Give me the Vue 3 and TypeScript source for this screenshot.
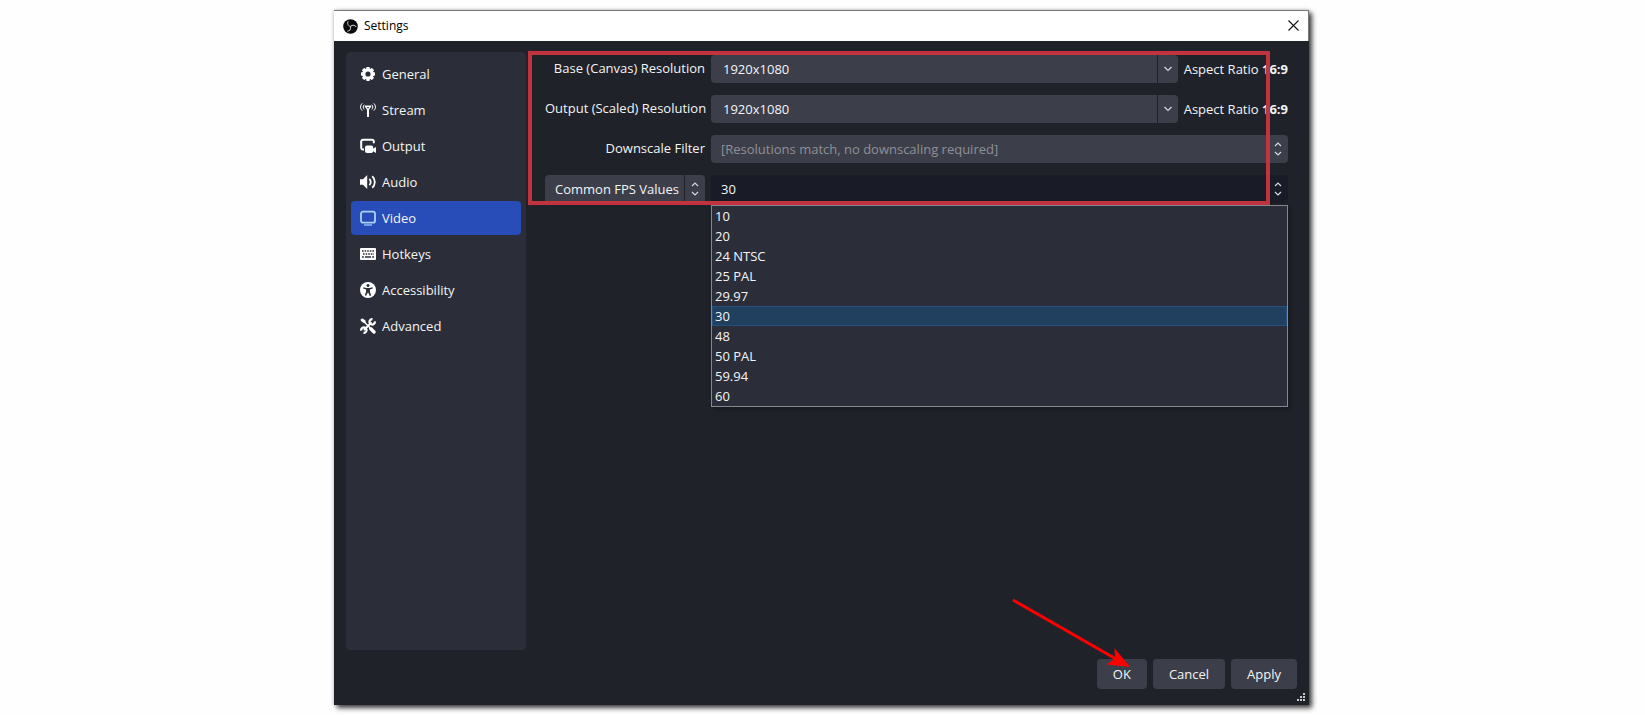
<script setup lang="ts">
import { ref } from 'vue'

const sections = ['General', 'Stream', 'Output', 'Audio', 'Video', 'Hotkeys', 'Accessibility', 'Advanced']
const activeSection = ref('Video')

const resolutions = ref([
  { id: 'base', label: 'Base (Canvas) Resolution', value: '1920x1080', ratio: '16:9' },
  { id: 'output', label: 'Output (Scaled) Resolution', value: '1920x1080', ratio: '16:9' },
])

const fpsValues = ['10', '20', '24 NTSC', '25 PAL', '29.97', '30', '48', '50 PAL', '59.94', '60']
const fps = ref('30')
</script>

<template>
  <main class="page">
    <section class="dialog" role="dialog" aria-labelledby="dialog-title">
      <header class="titlebar">
        <svg class="logo" viewBox="0 0 16 16" aria-hidden="true">
          <circle cx="8" cy="8" r="7.8" fill="#0b0b0b" />
          <g fill="none" stroke="#d0d0d0" stroke-width="1" stroke-linecap="round">
            <path d="M8 8C5.500 7.500 4.300 5.300 5.300 2.800" />
            <path d="M8 8C5.500 7.500 4.300 5.300 5.300 2.800" transform="rotate(120 8 8)" />
            <path d="M8 8C5.500 7.500 4.300 5.300 5.300 2.800" transform="rotate(240 8 8)" />
          </g>
        </svg>
        <h1 id="dialog-title">Settings</h1>
        <button class="close" type="button" aria-label="Close">
          <svg viewBox="0 0 11 11" aria-hidden="true"><path d="M.5.5l10 10M10.5.5l-10 10" fill="none" stroke="#111" stroke-width="1.1" /></svg>
        </button>
      </header>

      <div class="body">
        <nav class="sidebar" aria-label="Settings sections">
          <button
            v-for="name in sections"
            :key="name"
            type="button"
            class="nav-item"
            :class="{ active: name === activeSection }"
            @click="activeSection = name"
          >
            <svg class="icon" viewBox="0 0 16 16" aria-hidden="true">
              <g v-if="name === 'General'">
                <circle cx="8" cy="8" r="4.2" fill="none" stroke="#fff" stroke-width="3.2" />
                <g fill="#fff">
                  <rect
                    v-for="tooth in 8"
                    :key="tooth"
                    x="6.3"
                    y="1"
                    width="3.4"
                    height="3"
                    rx=".6"
                    :transform="`rotate(${tooth * 45} 8 8)`"
                  />
                </g>
              </g>
              <g v-else-if="name === 'Stream'" fill="none" stroke="#fff" stroke-linecap="round">
                <path d="M2 1.600C0 3.400 0 6.600 2 8.400M14 1.600c2 1.800 2 5 0 6.800" stroke-width="1" />
                <path d="M4 3c-1.100 1.200-1.100 2.900 0 4.100M12 3c1.100 1.200 1.100 2.900 0 4.100" stroke-width="1" />
                <path d="M5.300 4.200h5.400L8 7.900z" stroke-width="1.400" stroke-linejoin="round" />
                <path d="M8 7v8" stroke-width="2" stroke-linecap="butt" />
              </g>
              <g v-else-if="name === 'Output'">
                <path d="M4 11.500H3A1.800 1.800 0 0 1 1.200 9.700V3.600A1.800 1.800 0 0 1 3 1.800h9a1.800 1.800 0 0 1 1.800 1.800v1.600" fill="none" stroke="#fff" stroke-width="2" />
                <path d="M7 7.600h4.200a2 2 0 0 1 2 2v1.200l2.800-1.800v6l-2.800-1.800a2 2 0 0 1-2 1.800H7a2 2 0 0 1-2-2V9.600a2 2 0 0 1 2-2z" fill="#fff" />
              </g>
              <g v-else-if="name === 'Audio'">
                <path d="M0 5.200h3L7.200 1v14L3 10.800H0z" fill="#fff" />
                <path d="M9.300 4.800c1.900 1.700 1.900 4.700 0 6.400M12.200 2.300c3.500 3 3.500 8.400 0 11.400" fill="none" stroke="#fff" stroke-width="1.800" />
              </g>
              <g v-else-if="name === 'Video'">
                <rect x="1" y="1.700" width="14" height="11" rx="2" fill="none" stroke="#a9d4ff" stroke-width="1.800" />
                <path d="M4 15h8" stroke="#a9d4ff" stroke-width="1.200" />
              </g>
              <g v-else-if="name === 'Hotkeys'">
                <rect y="2" width="16" height="12" rx="1" fill="#fff" />
                <g stroke="#2b2e38" stroke-width="1.600">
                  <path d="M2 5h12" stroke-dasharray="1.600 1" />
                  <path d="M3 8h11" stroke-dasharray="1.600 1" />
                  <path d="M2 11h1.800M5 11h6M12.200 11H14" />
                </g>
              </g>
              <g v-else-if="name === 'Accessibility'">
                <circle cx="8" cy="8" r="8" fill="#fff" />
                <circle cx="8" cy="3.600" r="1.500" fill="#2b2e38" />
                <path d="M3.500 5.300l3 .7h3l3-.7.4 1.300-3 .9v2.300l1.300 3.700-1.400.5L8.200 10.600h-.4l-1.600 3.100-1.400-.5 1.300-3.700V7.500l-3-.9z" fill="#2b2e38" />
              </g>
              <g v-else fill="none" stroke="#fff" stroke-linecap="round">
                <path d="M11 5l-6.500 6.500" stroke-width="2" />
                <path d="M14.800 3.400a2.700 2.700 0 1 1-2.300-2.200" stroke-width="2.200" stroke-linecap="butt" />
                <path d="M1.200 12.600a2.700 2.700 0 1 1 2.300 2.200" stroke-width="2.200" stroke-linecap="butt" />
                <path d="M2.200 2l2 1.500" stroke-width="3" />
                <path d="M4 3.800l6 6" stroke-width="1.500" />
                <path d="M10.800 10.800l3.200 3.200" stroke-width="3.400" />
              </g>
            </svg>
            <span>{{ name }}</span>
          </button>
        </nav>

        <form class="form" @submit.prevent>
          <template v-for="row in resolutions" :key="row.id">
            <label :for="row.id">{{ row.label }}</label>
            <div class="resolution">
              <div class="combo">
                <input :id="row.id" v-model="row.value" type="text" />
                <button type="button" :aria-label="`Choose ${row.label}`">
                  <svg viewBox="0 0 10 6" aria-hidden="true"><path d="M1.500 1L5 4.500 8.500 1" /></svg>
                </button>
              </div>
              <span class="ratio">Aspect Ratio <b>{{ row.ratio }}</b></span>
            </div>
          </template>

          <label for="downscale">Downscale Filter</label>
          <div class="select">
            <select id="downscale" disabled>
              <option>[Resolutions match, no downscaling required]</option>
            </select>
            <svg class="updown" viewBox="0 0 8 14" aria-hidden="true"><path d="M1 4l3-3 3 3M1 10l3 3 3-3" /></svg>
          </div>

          <div class="select fps-kind">
            <select aria-label="FPS type">
              <option>Common FPS Values</option>
              <option>Integer FPS Value</option>
              <option>Fractional FPS Value</option>
            </select>
            <svg class="updown" viewBox="0 0 8 14" aria-hidden="true"><path d="M1 4l3-3 3 3M1 10l3 3 3-3" /></svg>
          </div>
          <div class="select fps-value">
            <select v-model="fps" aria-label="Common FPS value">
              <option v-for="value in fpsValues" :key="value">{{ value }}</option>
            </select>
            <svg class="updown" viewBox="0 0 8 14" aria-hidden="true"><path d="M1 4l3-3 3 3M1 10l3 3 3-3" /></svg>
            <ul class="popup" role="listbox" aria-label="Common FPS values">
              <li
                v-for="value in fpsValues"
                :key="value"
                role="option"
                :aria-selected="value === fps"
                :class="{ selected: value === fps }"
                @click="fps = value"
              >{{ value }}</li>
            </ul>
          </div>
          <div class="highlight" aria-hidden="true"></div>
        </form>
      </div>

      <footer class="actions">
        <button type="button">OK</button>
        <button type="button">Cancel</button>
        <button type="button">Apply</button>
        <svg class="arrow" viewBox="0 0 120 72" aria-hidden="true">
          <path d="M1 2l103 59" stroke="#f00" stroke-width="3" />
          <path d="M118 69L94.500 66.500l8.500-6-.5-10.500z" fill="#f00" />
        </svg>
        <svg class="grip" viewBox="0 0 8 8" aria-hidden="true">
          <path d="M6 0h2v2H6zM3 3h2v2H3zM6 3h2v2H6zM0 6h2v2H0zM3 6h2v2H3zM6 6h2v2H6z" fill="#c9cacd" />
        </svg>
      </footer>
    </section>
  </main>
</template>

<style>
body {
  margin: 0;
  background: #fefefe;
}
</style>

<style scoped>
* {
  box-sizing: border-box;
}

button,
input,
select {
  margin: 0;
  border: 0;
  padding: 0;
  font: inherit;
  color: inherit;
}

.page {
  display: flex;
  justify-content: center;
  min-height: 100vh;
  padding: 10px 2px 10px 0;
  font: 13px/20px "Open Sans", "Noto Sans", sans-serif;
  color: #f4f4f5;
}

.dialog {
  display: flex;
  flex-direction: column;
  width: 100%;
  max-width: 975px;
  background: #1f2229;
  box-shadow: 3px 3px 5px rgba(0, 0, 0, 0.75), 0 0 4px rgba(0, 0, 0, 0.2);
}

.titlebar {
  display: flex;
  align-items: center;
  gap: 6px;
  height: 31px;
  padding: 0 9px;
  background: #fff;
  border: solid #77787b;
  border-width: 1px 1px 0 0;
  color: #000;
}

.titlebar h1 {
  flex: 1;
  margin: 0;
  font: 12px/20px "Open Sans", "Noto Sans", sans-serif;
}

.logo {
  width: 15px;
  height: 15px;
}

.close {
  display: flex;
  padding-bottom: 2px;
  background: none;
}

.close svg {
  width: 11px;
  height: 11px;
}

.body {
  display: flex;
  flex: 1;
  gap: 19px;
  padding: 11px 21px 0 12px;
}

.sidebar {
  display: flex;
  flex: none;
  flex-direction: column;
  gap: 2px;
  width: 180px;
  padding: 5px;
  background: #2b2e38;
  border-radius: 4px;
}

.nav-item {
  display: flex;
  align-items: center;
  gap: 6px;
  height: 34px;
  padding: 0 9px;
  background: none;
  border-radius: 4px;
  text-align: left;
}

.nav-item.active {
  background: #284cb8;
}

.icon {
  width: 16px;
  height: 16px;
}

.form {
  position: relative;
  display: grid;
  flex: 1;
  grid-template-columns: 160px 1fr;
  grid-auto-rows: 28px;
  align-content: start;
  gap: 12px 6px;
  padding-top: 3px;
}

.form > label {
  padding-top: 3px;
  text-align: right;
  white-space: nowrap;
}

.resolution {
  display: flex;
  align-items: center;
  gap: 6px;
}

.combo {
  display: flex;
  flex: 1;
  height: 28px;
  overflow: hidden;
  background: #3c3f4a;
  border-radius: 4px;
}

.combo input {
  flex: 1;
  min-width: 0;
  padding: 0 12px;
  background: none;
}

.combo button {
  display: flex;
  align-items: center;
  justify-content: center;
  width: 21px;
  background: none;
  border-left: 1px solid #1f2229;
}

.combo svg {
  width: 10px;
  height: 6px;
}

.combo path,
.updown path {
  fill: none;
  stroke: #d8d8dc;
  stroke-width: 1.2;
}

.ratio {
  white-space: nowrap;
}

.select {
  position: relative;
  display: flex;
}

.select select {
  width: 100%;
  height: 28px;
  padding: 0 20px 0 10px;
  appearance: none;
  background: #3c3f4a;
  border-radius: 4px;
  opacity: 1;
}

.select select:disabled {
  color: #8f9097;
}

.fps-kind select {
  background: linear-gradient(#1f2229, #1f2229) right 20px top / 1px 100% no-repeat #3c3f4a;
}

.fps-value select {
  background: #191c27;
}

.updown {
  position: absolute;
  top: 7px;
  right: 6px;
  width: 8px;
  height: 14px;
  pointer-events: none;
}

.popup {
  position: absolute;
  top: 30px;
  right: 0;
  left: 0;
  margin: 0;
  padding: 0;
  list-style: none;
  background: #2b2e38;
  border: 1px solid #85878d;
  box-shadow: 2px 2px 4px rgba(0, 0, 0, 0.3);
}

.popup li {
  height: 20px;
  padding-left: 2px;
  border: 1px solid transparent;
  line-height: 18px;
}

.popup .selected {
  background: #213f5f;
  border-color: #23507c;
}

.highlight {
  position: absolute;
  top: -1px;
  right: 18px;
  left: -17px;
  height: 154px;
  border: 4px solid #c1343f;
  pointer-events: none;
}

.actions {
  position: relative;
  display: flex;
  justify-content: flex-end;
  gap: 6px;
  padding: 9px 12px 16px;
}

.actions button {
  height: 30px;
  padding: 0 16px;
  background: #3c3f4a;
  border-radius: 4px;
}

.arrow {
  position: absolute;
  right: 177px;
  bottom: 35px;
  width: 120px;
  height: 72px;
  pointer-events: none;
}

.grip {
  position: absolute;
  right: 4px;
  bottom: 4px;
  width: 8px;
  height: 8px;
}
</style>
